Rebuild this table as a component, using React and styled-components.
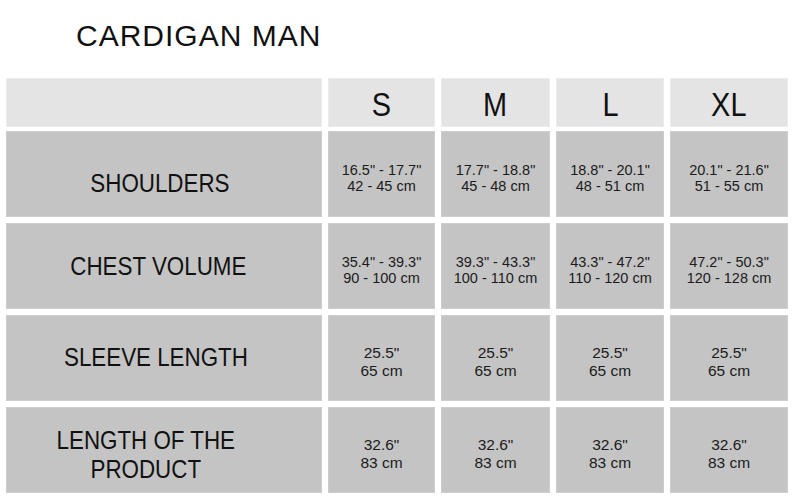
import React from "react";
import styled, { createGlobalStyle } from "styled-components";

const GlobalStyle = createGlobalStyle`
  html, body {
    margin: 0;
    padding: 0;
    background: #ffffff;
  }
  body {
    font-family: "Liberation Sans", Arial, sans-serif;
    color: #1b1b1b;
  }
`;

const sizes = ["S", "M", "L", "XL"];

const rows = [
  {
    label: ["SHOULDERS"],
    dy: 9,
    dx: 8,
    values: [
      ["16.5\" - 17.7\"", "42 - 45 cm"],
      ["17.7\" - 18.8\"", "45 - 48 cm"],
      ["18.8\" - 20.1\"", "48 - 51 cm"],
      ["20.1\" - 21.6\"", "51 - 55 cm"],
    ],
  },
  {
    label: ["CHEST VOLUME"],
    dy: 0,
    dx: 11,
    values: [
      ["35.4\" - 39.3\"", "90 - 100 cm"],
      ["39.3\" - 43.3\"", "100 - 110 cm"],
      ["43.3\" - 47.2\"", "110 - 120 cm"],
      ["47.2\" - 50.3\"", "120 - 128 cm"],
    ],
  },
  {
    label: ["SLEEVE LENGTH"],
    dy: -1,
    dx: 16,
    large: true,
    values: [
      ["25.5\"", "65 cm"],
      ["25.5\"", "65 cm"],
      ["25.5\"", "65 cm"],
      ["25.5\"", "65 cm"],
    ],
  },
  {
    label: ["LENGTH OF THE", "PRODUCT"],
    dy: 5,
    dx: 36,
    large: true,
    values: [
      ["32.6\"", "83 cm"],
      ["32.6\"", "83 cm"],
      ["32.6\"", "83 cm"],
      ["32.6\"", "83 cm"],
    ],
  },
];

export default function App() {
  return (
    <>
      <GlobalStyle />
      <Page>
        <Title>CARDIGAN MAN</Title>
        <HeadRow>
          <HeadCell />
          {sizes.map((s) => (
            <HeadCell key={s}>
              <SizeText>{s}</SizeText>
            </HeadCell>
          ))}
        </HeadRow>
        <Body>
          {rows.map((row) => (
            <React.Fragment key={row.label.join(" ")}>
              <LabelCell $dy={row.dy} $dx={row.dx}>
                <LabelText>
                  {row.label.map((line) => (
                    <span key={line}>{line}</span>
                  ))}
                </LabelText>
              </LabelCell>
              {row.values.map((v, i) => (
                <ValueCell key={i}>
                  <ValueText $large={row.large}>
                    <span>{v[0]}</span>
                    <span>{v[1]}</span>
                  </ValueText>
                </ValueCell>
              ))}
            </React.Fragment>
          ))}
        </Body>
      </Page>
    </>
  );
}

const Page = styled.div`
  width: 794px;
  height: 503px;
  padding: 18px 6px 0;
  box-sizing: border-box;
  overflow: hidden;
`;

const Title = styled.h1`
  margin: 0 0 24px 70px;
  height: 36px;
  font-size: 30px;
  line-height: 36px;
  font-weight: 400;
  letter-spacing: 1px;
  color: #111;
`;

const columns = "316px 107px 109px 108px 118px";

const HeadRow = styled.div`
  display: grid;
  grid-template-columns: ${columns};
  column-gap: 6px;
  height: 49px;
  margin-bottom: 4px;
`;

const HeadCell = styled.div`
  display: flex;
  align-items: center;
  justify-content: center;
  background: #e4e4e4;
  box-shadow: inset 0 0 0 1px #ececec;
`;

const SizeText = styled.span`
  display: inline-block;
  font-size: 34px;
  line-height: 1;
  transform: scaleX(0.85);
  padding-top: 3px;
  color: #111;
`;

const Body = styled.div`
  display: grid;
  grid-template-columns: ${columns};
  grid-auto-rows: 86px;
  gap: 6px;
`;

const Cell = styled.div`
  display: flex;
  align-items: center;
  justify-content: center;
  background: #c4c4c4;
  box-shadow: inset 0 0 0 1px #cdcdcd;
  box-sizing: border-box;
`;

const LabelCell = styled(Cell)`
  padding-top: ${(p) => (p.$dy > 0 ? p.$dy * 2 : 0)}px;
  padding-bottom: ${(p) => (p.$dy < 0 ? -p.$dy * 2 : 0)}px;
  padding-right: ${(p) => p.$dx}px;
`;

const LabelText = styled.div`
  display: flex;
  flex-direction: column;
  align-items: center;
  font-size: 26px;
  line-height: 29px;
  transform: scaleX(0.86);
  color: #111;
  white-space: nowrap;
`;

const ValueCell = styled(Cell)`
  padding-top: 8px;
`;

const ValueText = styled.div`
  display: flex;
  flex-direction: column;
  align-items: center;
  font-size: ${(p) => (p.$large ? "15.5px" : "14.5px")};
  line-height: ${(p) => (p.$large ? "18px" : "16px")};
  color: #1b1b1b;
  white-space: nowrap;
`;
